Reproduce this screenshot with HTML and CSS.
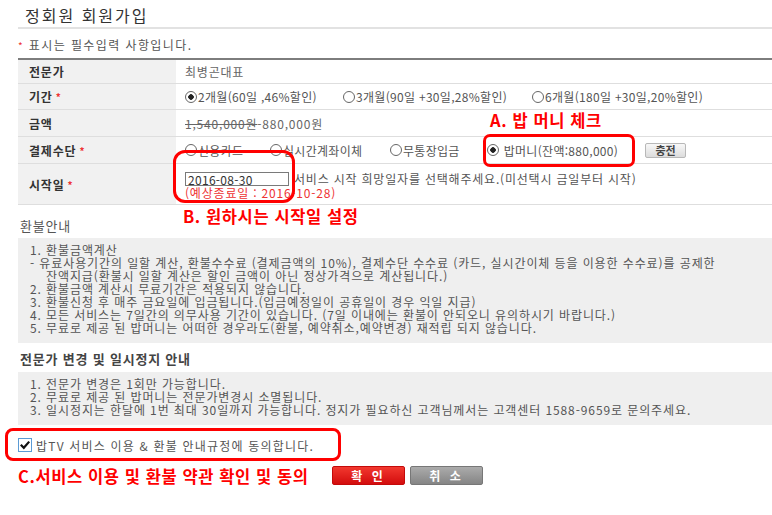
FILE: index.html
```html
<!DOCTYPE html>
<html lang="ko">
<head>
    <meta charset="UTF-8">
    <meta name="viewport" content="width=device-width, initial-scale=1.0">
    <title>정회원 회원가입</title>
    <link rel="stylesheet" href="styles.css">
</head>
<body>

<div class="page">
    <h2 class="title">정회원 회원가입</h2>
    <p class="note"><span class="req">*</span> 표시는 필수입력 사항입니다.</p>

    <div class="form-table">
        <div class="row row-expert">
            <div class="label">전문가</div>
            <div class="value">최병곤대표</div>
        </div>
        <div class="row row-period">
            <div class="label">기간 <span class="req">*</span></div>
            <div class="value">
                <span class="opt w-158"><span class="radio on"></span>2개월(60일 ,46%할인)</span>
                <span class="opt w-189"><span class="radio"></span>3개월(90일 +30일,28%할인)</span>
                <span class="opt"><span class="radio"></span>6개월(180일 +30일,20%할인)</span>
            </div>
        </div>
        <div class="row row-price">
            <div class="label">금액</div>
            <div class="value"><span><del>1,540,000원</del>-880,000원</span></div>
        </div>
        <div class="row row-pay">
            <div class="label">결제수단 <span class="req">*</span></div>
            <div class="value">
                <span class="opt w-85"><span class="radio"></span>신용카드</span>
                <span class="opt w-120"><span class="radio"></span>실시간계좌이체</span>
                <span class="opt w-97"><span class="radio"></span>무통장입금</span>
                <span class="opt w-158"><span class="radio on"></span>&nbsp;밥머니(잔액:880,000)</span>
                <button class="btn-charge" type="button">충전</button>
            </div>
        </div>
        <div class="row row-start">
            <div class="label">시작일 <span class="req">*</span></div>
            <div class="value value-start">
                <div class="start-line">
                    <input class="date-input" type="text" value="2016-08-30">
                    <span>서비스 시작 희망일자를 선택해주세요.(미선택시 금일부터 시작)</span>
                </div>
                <div class="end-date">(예상종료일 : 2016-10-28)</div>
            </div>
        </div>
    </div>

    <h3 class="section-title">환불안내</h3>
    <div class="info-box">
        <p>1. 환불금액계산</p>
        <p>- 유료사용기간의 일할 계산, 환불수수료 (결제금액의 10%), 결제수단 수수료 (카드, 실시간이체 등을 이용한 수수료)를 공제한</p>
        <p class="indent">잔액지급(환불시 일할 계산은 할인 금액이 아닌 정상가격으로 계산됩니다.)</p>
        <p>2. 환불금액 계산시 무료기간은 적용되지 않습니다.</p>
        <p>3. 환불신청 후 매주 금요일에 입금됩니다.(입금예정일이 공휴일이 경우 익일 지급)</p>
        <p>4. 모든 서비스는 7일간의 의무사용 기간이 있습니다. (7일 이내에는 환불이 안되오니 유의하시기 바랍니다.)</p>
        <p>5. 무료로 제공 된 밥머니는 어떠한 경우라도(환불, 예약취소,예약변경) 재적립 되지 않습니다.</p>
    </div>

    <h3 class="section-title bold">전문가 변경 및 일시정지 안내</h3>
    <div class="info-box info-box-small">
        <p>1. 전문가 변경은 1회만 가능합니다.</p>
        <p>2. 무료로 제공 된 밥머니는 전문가변경시 소멸됩니다.</p>
        <p>3. 일시정지는 한달에 1번 최대 30일까지 가능합니다. 정지가 필요하신 고객님께서는 고객센터 1588-9659로 문의주세요.</p>
    </div>

    <div class="agree">
        <svg class="check" width="14" height="14" viewBox="0 0 14 14">
            <rect x="0.5" y="0.5" width="13" height="13" fill="#fff" stroke="#5b9bd5"/>
            <path d="M2.8 6.8 L5.8 9.8 L11.2 3.6" fill="none" stroke="#111" stroke-width="2.2"/>
        </svg>
        <span>밥TV 서비스 이용 &amp; 환불 안내규정에 동의합니다.</span>
    </div>

    <div class="footer">
        <span class="annot-text annot-c">C.서비스 이용 및 환불 약관 확인 및 동의</span>
        <button class="btn btn-ok" type="button">확 인</button>
        <button class="btn btn-cancel" type="button">취 소</button>
    </div>

    <!-- annotation overlays -->
    <div class="annot-box box-a"></div>
    <div class="annot-box box-b"></div>
    <div class="annot-box box-c"></div>
    <span class="annot-text text-a">A. 밥 머니 체크</span>
    <span class="annot-text text-b">B. 원하시는 시작일 설정</span>
</div>

</body>
</html>
```

FILE: styles.css
```css
body {
    margin: 0;
    font-family: "Noto Sans CJK KR", "Liberation Sans", sans-serif;
    font-size: 12px;
    letter-spacing: 0.8px;
    color: #555;
    background: #fff;
}

.page {
    position: relative;
    padding-left: 18px;
}

.title {
    margin: 0;
    padding: 6px 0 3px 7px;
    font-size: 16px;
    line-height: 18px;
    font-weight: normal;
    letter-spacing: 2px;
    color: #333;
    border-bottom: 2px solid #e2e2e2;
}

.note {
    margin: 8px 0 4px;
    line-height: 16px;
    letter-spacing: 1.4px;
}

.req {
    color: #e33;
    font-size: 10px;
}

/* form table */
.form-table {
    border-top: 2px solid #7d7d7d;
}

.row {
    display: grid;
    grid-template-columns: 158px 1fr;
    border-bottom: 1px solid #dedede;
    box-sizing: border-box;
}

.row-expert { height: 24px; }
.row-period { height: 26px; }
.row-price { height: 27px; }
.row-pay { height: 27px; }
.row-start { height: 41px; }

.label {
    display: flex;
    align-items: center;
    gap: 3px;
    padding-left: 11px;
    background: #f1f1f1;
    font-weight: bold;
    color: #333;
}

.value {
    display: flex;
    align-items: center;
    padding-left: 9px;
    color: #666;
}

.opt {
    display: flex;
    align-items: center;
    flex: 0 0 auto;
    white-space: nowrap;
    color: #555;
    letter-spacing: 0.3px;
}

.w-85 { width: 85px; }
.w-97 { width: 97px; }
.w-120 { width: 120px; }
.w-158 { width: 158px; }
.w-189 { width: 189px; }

.radio {
    width: 12px;
    height: 12px;
    margin-right: 1px;
    border: 1px solid #666;
    border-radius: 50%;
    box-sizing: border-box;
    background: #fff;
}

.radio.on {
    background: radial-gradient(circle, #222 0 2.5px, #fff 3px);
}

del {
    color: #666;
}

.btn-charge {
    width: 41px;
    height: 15px;
    padding: 0;
    border: 1px solid #b8b8b8;
    border-radius: 2px;
    background: linear-gradient(#f8f8f8, #dcdcdc);
    font-family: inherit;
    font-size: 11px;
    font-weight: bold;
    line-height: 13px;
    color: #444;
}

.value-start {
    flex-direction: column;
    align-items: flex-start;
    justify-content: flex-start;
    padding-top: 8px;
    box-sizing: border-box;
}

.start-line {
    display: flex;
    align-items: center;
    gap: 5px;
    color: #555;
    line-height: 14px;
}

.date-input {
    width: 104px;
    height: 14px;
    margin: 0;
    padding: 0 2px;
    border: 1px solid #7a7a7a;
    box-sizing: border-box;
    font-family: inherit;
    font-size: 12px;
    line-height: 12px;
    letter-spacing: 0.3px;
    color: #333;
}

.end-date {
    color: #e33;
    line-height: 13px;
}

/* notice boxes */
.section-title {
    margin: 13px 0 4px 2px;
    font-size: 13px;
    line-height: 16px;
    font-weight: normal;
    color: #555;
}

.section-title.bold {
    margin-top: 8px;
    margin-bottom: 5px;
    font-weight: bold;
    color: #444;
}

.info-box {
    background: #efefef;
    padding: 5px 12px 9px;
    letter-spacing: 0.9px;
}

.info-box p {
    margin: 0;
    line-height: 13px;
    white-space: nowrap;
}

.info-box .indent {
    padding-left: 16px;
}

.agree {
    display: flex;
    align-items: center;
    gap: 4px;
    height: 32px;
    margin-top: 4px;
    letter-spacing: 1.2px;
}

.footer {
    display: flex;
    align-items: center;
    gap: 5px;
    margin-top: 5px;
}

.btn {
    width: 73px;
    height: 19px;
    padding: 0;
    border-radius: 2px;
    font-family: inherit;
    font-size: 12px;
    font-weight: bold;
    letter-spacing: 3px;
    color: #fff;
    line-height: 17px;
}

.btn-ok {
    background: linear-gradient(#f2382f, #d30d0d);
    border: 1px solid #c40a0a;
}

.btn-cancel {
    background: linear-gradient(#ababab, #858585);
    border: 1px solid #777;
}

/* red annotations */
.annot-text {
    font-size: 16.5px;
    font-weight: bold;
    line-height: 18px;
    letter-spacing: 0.6px;
    color: #f00;
    white-space: nowrap;
}

.annot-c {
    width: 309px;
}

.annot-box {
    position: absolute;
    border: 3px solid #f00;
    box-sizing: border-box;
}

.box-a { left: 483px; top: 134px; width: 152px; height: 33px; border-radius: 7px; }
.box-b { left: 173px; top: 150px; width: 122px; height: 53px; border-radius: 12px; }
.box-c { left: 5px; top: 428px; width: 336px; height: 33px; border-radius: 8px; }

.text-a { position: absolute; left: 490px; top: 111px; }
.text-b { position: absolute; left: 183px; top: 207px; }
```
